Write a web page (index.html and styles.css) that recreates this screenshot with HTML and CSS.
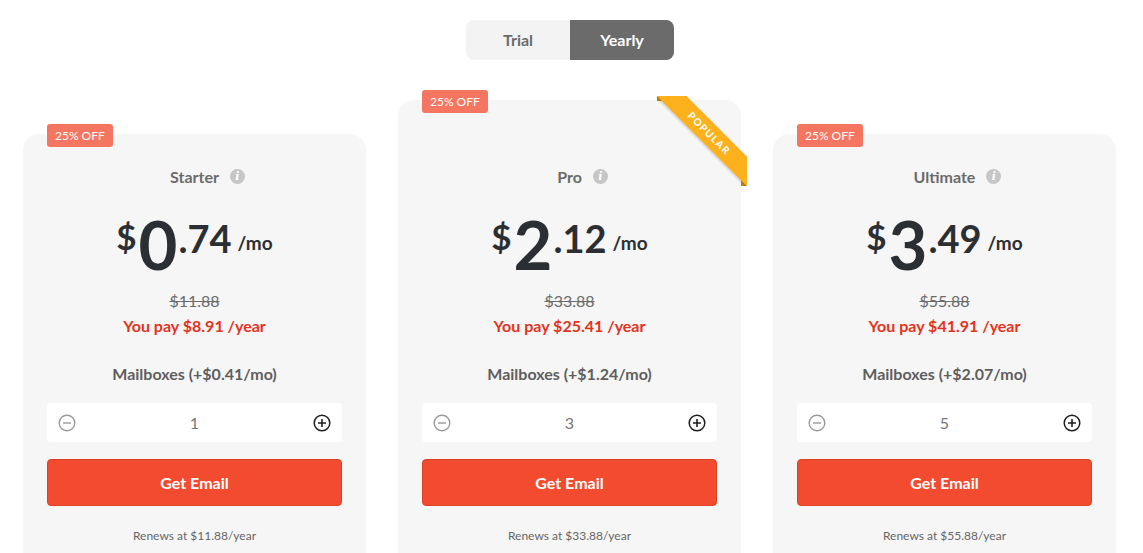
FILE: index.html
```html
<!DOCTYPE html>
<html>
<head>
<meta charset="utf-8">
<link rel="stylesheet" href="styles.css">
</head>
<body>
<div class="toggle-wrap">
  <div class="toggle">
    <div class="toggle-opt">Trial</div>
    <div class="toggle-opt active">Yearly</div>
  </div>
</div>
<div class="cards">
  <div class="card offset">
    <span class="badge">25% OFF</span>
    <div class="title"><span class="name">Starter<span class="info">i</span></span></div>
    <div class="price"><span class="cur">$</span><span class="int">0</span><span class="dec">.74</span><span class="per">/mo</span></div>
    <div class="strike">$11.88</div>
    <div class="pay">You pay $8.91 /year</div>
    <div class="mail">Mailboxes (+$0.41/mo)</div>
    <div class="stepper">
      <svg class="ico minus" viewBox="0 0 18 18"><circle cx="9" cy="9" r="7.8" fill="none" stroke="#9a9a9a" stroke-width="1.4"/><path d="M5 9h8" stroke="#9a9a9a" stroke-width="1.4"/></svg>
      <span class="qty">1</span>
      <svg class="ico plus" viewBox="0 0 18 18"><circle cx="9" cy="9" r="7.8" fill="none" stroke="#1e1e1e" stroke-width="1.5"/><path d="M5 9h8M9 5v8" stroke="#1e1e1e" stroke-width="1.6"/></svg>
    </div>
    <button class="btn">Get Email</button>
    <div class="renew">Renews at $11.88/year</div>
  </div>
  <div class="card popular">
    <span class="badge">25% OFF</span>
    <div class="ribbon"><span>POPULAR</span></div>
    <div class="title"><span class="name">Pro<span class="info">i</span></span></div>
    <div class="price"><span class="cur">$</span><span class="int">2</span><span class="dec">.12</span><span class="per">/mo</span></div>
    <div class="strike">$33.88</div>
    <div class="pay">You pay $25.41 /year</div>
    <div class="mail">Mailboxes (+$1.24/mo)</div>
    <div class="stepper">
      <svg class="ico minus" viewBox="0 0 18 18"><circle cx="9" cy="9" r="7.8" fill="none" stroke="#9a9a9a" stroke-width="1.4"/><path d="M5 9h8" stroke="#9a9a9a" stroke-width="1.4"/></svg>
      <span class="qty">3</span>
      <svg class="ico plus" viewBox="0 0 18 18"><circle cx="9" cy="9" r="7.8" fill="none" stroke="#1e1e1e" stroke-width="1.5"/><path d="M5 9h8M9 5v8" stroke="#1e1e1e" stroke-width="1.6"/></svg>
    </div>
    <button class="btn">Get Email</button>
    <div class="renew">Renews at $33.88/year</div>
  </div>
  <div class="card offset">
    <span class="badge">25% OFF</span>
    <div class="title"><span class="name">Ultimate<span class="info">i</span></span></div>
    <div class="price"><span class="cur">$</span><span class="int">3</span><span class="dec">.49</span><span class="per">/mo</span></div>
    <div class="strike">$55.88</div>
    <div class="pay">You pay $41.91 /year</div>
    <div class="mail">Mailboxes (+$2.07/mo)</div>
    <div class="stepper">
      <svg class="ico minus" viewBox="0 0 18 18"><circle cx="9" cy="9" r="7.8" fill="none" stroke="#9a9a9a" stroke-width="1.4"/><path d="M5 9h8" stroke="#9a9a9a" stroke-width="1.4"/></svg>
      <span class="qty">5</span>
      <svg class="ico plus" viewBox="0 0 18 18"><circle cx="9" cy="9" r="7.8" fill="none" stroke="#1e1e1e" stroke-width="1.5"/><path d="M5 9h8M9 5v8" stroke="#1e1e1e" stroke-width="1.6"/></svg>
    </div>
    <button class="btn">Get Email</button>
    <div class="renew">Renews at $55.88/year</div>
  </div>
</div>
</body>
</html>
```
FILE: styles.css
```css
* { box-sizing: border-box; }
html, body { margin: 0; padding: 0; background: #fff; }
body {
  font-family: Lato, "Open Sans", sans-serif;
  color: #6b6b6b;
  overflow: hidden;
}
.toggle-wrap {
  display: flex;
  justify-content: center;
  padding-top: 20px;
  padding-right: 3px;
}
.toggle {
  display: flex;
  background: #f3f3f3;
  border-radius: 8px;
  overflow: hidden;
}
.toggle-opt {
  width: 104px;
  height: 40px;
  line-height: 40px;
  text-align: center;
  font-weight: 700;
  font-size: 16px;
  color: #6b6b6b;
}
.toggle-opt.active {
  background: #6b6b6b;
  color: #fff;
}
.cards {
  display: flex;
  align-items: flex-start;
  gap: 32px;
  padding-left: 23px;
  margin-top: 40px;
}
.card {
  position: relative;
  width: 343px;
  flex: none;
  background: #f6f6f6;
  border-radius: 16px;
  padding: 31px 24px 40px;
  text-align: center;
}
.card.offset { margin-top: 34px; }
.card.popular { padding-top: 65px; }
.badge {
  position: absolute;
  top: -10px;
  left: 24px;
  height: 23px;
  line-height: 23px;
  padding: 0 8px;
  background: #f47560;
  color: #fff;
  font-size: 12px;
  border-radius: 3px;
}
.title {
  height: 24px;
  line-height: 24px;
  font-size: 16px;
  font-weight: 700;
  color: #6b6b6b;
}
.name {
  position: relative;
  display: inline-block;
}
.info {
  position: absolute;
  left: 100%;
  top: 4px;
  margin-left: 11px;
  width: 15px;
  height: 15px;
  border-radius: 50%;
  background: #c6c6c6;
  color: #fff;
  font-size: 11px;
  line-height: 15px;
  font-style: italic;
  font-weight: 700;
  font-family: "DejaVu Serif", serif;
  text-align: center;
}
.price {
  display: flex;
  justify-content: center;
  align-items: flex-start;
  margin-top: 22px;
  color: #2b2f33;
  font-weight: 700;
  line-height: 1;
  height: 66px;
}
.cur { font-size: 35px; margin-top: 8px; margin-right: 2px; }
.int { font-size: 67px; }
.dec { font-size: 38px; margin-top: 8px; margin-left: 1px; }
.per { font-size: 19px; margin-top: 22px; margin-left: 6px; }
.strike {
  margin-top: 11px;
  line-height: 25px;
  font-size: 16px;
  text-decoration: line-through;
  color: #6b6b6b;
}
.pay {
  line-height: 25px;
  font-size: 16px;
  font-weight: 700;
  color: #e5321c;
}
.mail {
  margin-top: 24px;
  line-height: 24px;
  font-size: 16px;
  font-weight: 700;
  color: #5e5e5e;
}
.stepper {
  margin-top: 17px;
  height: 39px;
  background: #fff;
  border-radius: 4px;
  display: flex;
  align-items: center;
  justify-content: space-between;
  padding: 0 11px 0 11px;
}
.ico { width: 18px; height: 18px; display: block; }
.qty { font-size: 16px; color: #777; }
.btn {
  display: block;
  width: 100%;
  margin-top: 17px;
  height: 47px;
  background: #f34b2f;
  border: 1px solid #dc4126;
  border-radius: 4px;
  color: #fff;
  font-family: inherit;
  font-size: 16px;
  font-weight: 700;
}
.renew {
  margin-top: 21px;
  line-height: 18px;
  font-size: 12px;
  color: #666;
}
.ribbon {
  position: absolute;
  top: -4px;
  right: -6px;
  width: 90px;
  height: 90px;
  overflow: hidden;
}
.ribbon::before, .ribbon::after {
  content: "";
  position: absolute;
  background: #c9840f;
  z-index: 0;
}
.ribbon::before { top: 0; left: 0; width: 7px; height: 5px; }
.ribbon::after { bottom: 0; right: 0; width: 6px; height: 7px; }
.ribbon span {
  position: absolute;
  z-index: 1;
  left: -14px;
  top: 27px;
  width: 132px;
  height: 21px;
  line-height: 21px;
  background: #fdb11d;
  color: #fff;
  font-size: 10px;
  font-weight: 700;
  letter-spacing: 1.3px;
  text-align: center;
  transform: rotate(45deg);
  box-shadow: 0 1px 3px rgba(0,0,0,0.2);
}
```
